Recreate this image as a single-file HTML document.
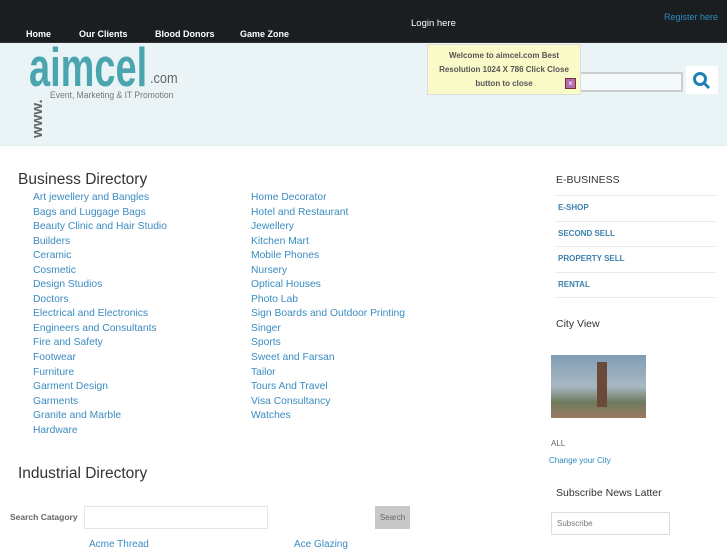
<!DOCTYPE html>
<html><head><meta charset="utf-8"><style>
*{margin:0;padding:0;box-sizing:border-box}
body{width:727px;height:545px;overflow:hidden;background:#fff;font-family:"Liberation Sans",sans-serif;position:relative}
.a{position:absolute;white-space:nowrap}
.top{position:absolute;left:0;top:0;width:727px;height:43px;background:#1a1e21;border-bottom:1px solid #333}
.nav{font-size:9px;font-weight:bold;color:#fff;top:29px}
.band{position:absolute;left:0;top:43px;width:727px;height:103px;background:#eaf4f6;border-bottom:1px dotted #d8e6ea}
.l{font-size:10.3px;color:#3a8cc0;line-height:14.55px}
h2{font-weight:normal;color:#333;font-size:15.5px}
.eb{font-size:8px;font-weight:bold;color:#3b82ad;left:558px}
.sep{position:absolute;left:555px;width:161px;height:1px;background:#e6ecec}
</style></head><body>
<div class="top"></div>
<div class="a nav" style="left:26px">Home</div>
<div class="a nav" style="left:79px">Our Clients</div>
<div class="a nav" style="left:155px">Blood Donors</div>
<div class="a nav" style="left:240px">Game Zone</div>
<div class="a" style="left:411px;top:18px;font-size:9.5px;color:#fff">Login here</div>
<div class="a" style="left:664px;top:12px;font-size:9px;color:#2a8bbf">Register here</div>
<div class="band"></div>
<div class="a" style="left:29px;top:37px;font-size:55px;line-height:60px;color:#4aa5ae;font-weight:bold;transform:scaleX(0.69);transform-origin:left">aimcel</div>
<div class="a" style="left:150px;top:70px;font-size:15px;color:#666;transform:scaleX(0.85);transform-origin:left">.com</div>
<div class="a" style="left:50px;top:90px;font-size:9.5px;color:#777;transform:scaleX(0.9);transform-origin:left">Event, Marketing &amp; IT Promotion</div>
<div class="a" style="left:29px;top:138px;font-size:15px;font-weight:bold;color:#666;transform:rotate(-90deg);transform-origin:left top">www.</div>
<div class="a" style="left:578px;top:72px;width:105px;height:20px;border:2px solid #ccc;background:#f4fafb"></div>
<div class="a" style="left:686px;top:66px;width:32px;height:28px;background:#fff"></div>
<svg class="a" style="left:692px;top:71px" width="20" height="20" viewBox="0 0 20 20"><circle cx="8" cy="8" r="5.5" fill="none" stroke="#1f7fb7" stroke-width="3"/><path d="M12 12l5 5" stroke="#1f7fb7" stroke-width="3"/></svg>
<div class="a" style="left:427px;top:44px;width:154px;height:51px;background:#fafac8;border:1px solid #ddd;font-size:8px;font-weight:bold;color:#555;text-align:center;line-height:14px;padding-top:4px;white-space:normal">Welcome to aimcel.com Best Resolution 1024 X 786 Click Close button to close</div>
<div class="a" style="left:565px;top:78px;width:11px;height:11px;background:#b56bb0;border:1px solid #733;color:#fff;font-size:8px;text-align:center;line-height:9px">×</div>
<h2 class="a" style="left:18px;top:171px">Business Directory</h2>
<div class="a l" style="left:33px;top:191px">Art jewellery and Bangles<br>Bags and Luggage Bags<br>Beauty Clinic and Hair Studio<br>Builders<br>Ceramic<br>Cosmetic<br>Design Studios<br>Doctors<br>Electrical and Electronics<br>Engineers and Consultants<br>Fire and Safety<br>Footwear<br>Furniture<br>Garment Design<br>Garments<br>Granite and Marble<br>Hardware</div>
<div class="a l" style="left:251px;top:191px">Home Decorator<br>Hotel and Restaurant<br>Jewellery<br>Kitchen Mart<br>Mobile Phones<br>Nursery<br>Optical Houses<br>Photo Lab<br>Sign Boards and Outdoor Printing<br>Singer<br>Sports<br>Sweet and Farsan<br>Tailor<br>Tours And Travel<br>Visa Consultancy<br>Watches</div>
<h2 class="a" style="left:18px;top:465px">Industrial Directory</h2>
<div class="a" style="left:10px;top:512px;font-size:8.5px;font-weight:bold;color:#666">Search Catagory</div>
<div class="a" style="left:84px;top:506px;width:184px;height:23px;border:1px solid #e4e4e4"></div>
<div class="a" style="left:375px;top:506px;width:35px;height:23px;background:#c8c8c8;font-size:8px;color:#666;text-align:center;line-height:23px">Search</div>
<div class="a" style="left:89px;top:539px;font-size:10px;color:#3a8cc0">Acme Thread</div>
<div class="a" style="left:294px;top:539px;font-size:10px;color:#3a8cc0">Ace Glazing</div>
<div class="a" style="left:556px;top:174px;font-size:10.5px;color:#333">E-BUSINESS</div>
<div class="sep" style="top:195px"></div>
<div class="a eb" style="top:203px">E-SHOP</div>
<div class="sep" style="top:221px"></div>
<div class="a eb" style="top:229px">SECOND SELL</div>
<div class="sep" style="top:246px"></div>
<div class="a eb" style="top:254px">PROPERTY SELL</div>
<div class="sep" style="top:272px"></div>
<div class="a eb" style="top:280px">RENTAL</div>
<div class="sep" style="top:297px"></div>
<div class="a" style="left:556px;top:318px;font-size:10.5px;color:#333">City View</div>
<div class="a" style="left:551px;top:355px;width:95px;height:63px;background:linear-gradient(#7f9db5 0%,#a8b8c2 50%,#6e7a5e 75%,#9b7a60 100%)"></div>
<div class="a" style="left:597px;top:362px;width:10px;height:45px;background:#6b4a3a"></div>
<div class="a" style="left:551px;top:439px;font-size:8px;color:#666">ALL</div>
<div class="a" style="left:549px;top:456px;font-size:8px;color:#2a8bbf">Change your City</div>
<div class="a" style="left:556px;top:487px;font-size:10.5px;color:#333">Subscribe News Latter</div>
<div class="a" style="left:551px;top:512px;width:119px;height:23px;border:1px solid #ddd;font-size:8px;color:#777;padding:6px 5px">Subscribe</div>
</body></html>
